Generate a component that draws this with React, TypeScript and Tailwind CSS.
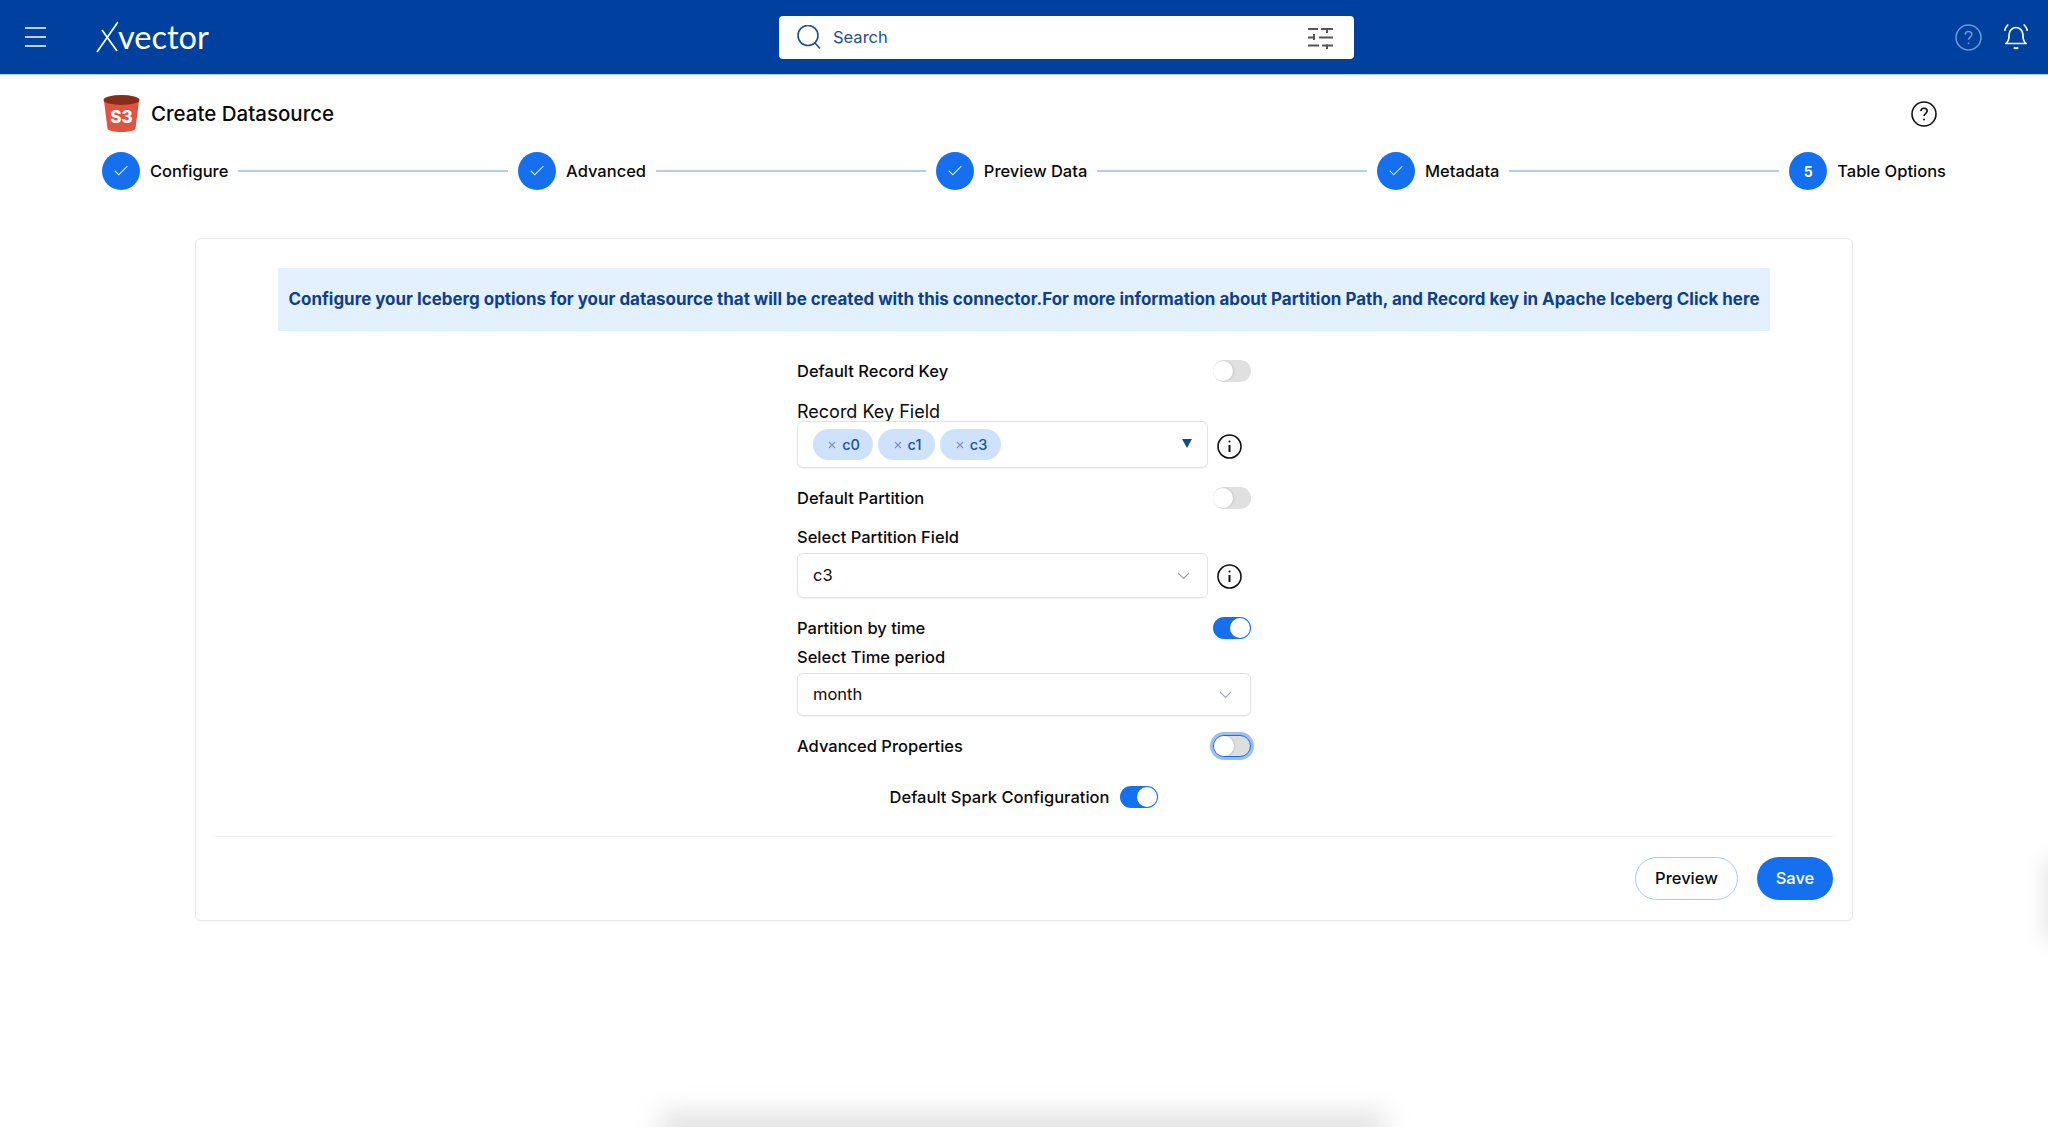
import { Fragment } from 'react';
import { Check } from 'lucide-react';

const steps = ['Configure', 'Advanced', 'Preview Data', 'Metadata', 'Table Options'];

function Toggle({ on = false, focused = false }: { on?: boolean; focused?: boolean }) {
  if (on) {
    return (
      <div className="flex h-[22px] w-[38px] shrink-0 items-center justify-end rounded-full bg-[#1570ef] p-px">
        <div className="h-5 w-5 rounded-full bg-white"></div>
      </div>
    );
  }
  return (
    <div
      className={
        focused
          ? 'flex h-[22px] w-[38px] shrink-0 items-center rounded-full border border-[#1570ef] bg-[#dedede] shadow-[0_0_0_3px_#9cc0f5]'
          : 'flex h-[22px] w-[38px] shrink-0 items-center rounded-full bg-[#e0e0e0]'
      }
    >
      <div className="h-5 w-5 rounded-full bg-white shadow-[1px_0_2px_rgba(0,0,0,0.12)]"></div>
    </div>
  );
}

function InfoIcon() {
  return (
    <svg width="25" height="25" viewBox="0 0 25 25" fill="none" stroke="#111" strokeWidth="1.6" className="shrink-0">
      <circle cx="12.5" cy="12.5" r="11.5" />
      <line x1="12.5" y1="11" x2="12.5" y2="18" strokeWidth="2" />
      <circle cx="12.5" cy="7.5" r="1.1" fill="#111" stroke="none" />
    </svg>
  );
}

function Chevron({ color = '#9aa3ad' }: { color?: string }) {
  return (
    <svg width="13" height="8" viewBox="0 0 13 8" fill="none" stroke={color} strokeWidth="1.1">
      <path d="M1 1l5.5 5.5L12 1" />
    </svg>
  );
}

function Chip({ label, width }: { label: string; width: string }) {
  return (
    <div className={`flex h-[31px] items-center justify-center gap-[6px] rounded-full bg-[#cfe2fb] pl-[2px] text-[14.5px] font-medium text-[#1d5296] ${width}`}>
      <svg width="8" height="8" viewBox="0 0 8 8" stroke="#7f93b8" strokeWidth="1.1">
        <path d="M1 1l6 6M7 1l-6 6" />
      </svg>
      <span>{label}</span>
    </div>
  );
}

function S3Icon() {
  return (
    <svg width="37" height="37" viewBox="0 0 37 37" className="shrink-0">
      <path d="M1 6h35l-3.5 27.5c-.3 2-6.5 3.5-14 3.5s-13.700-1.500-14-3.500z" fill="#e0533f" />
      <ellipse cx="18.500" cy="5" rx="18" ry="5" fill="#8a2c1c" />
      <text x="18.500" y="28" textAnchor="middle" fontSize="17" fontWeight="800" fill="#fff" fontFamily="Inter, sans-serif">S3</text>
    </svg>
  );
}

function SlidersIcon() {
  return (
    <svg width="25" height="23" viewBox="0 0 25 23" fill="#555">
      <rect x="0" y="2" width="10" height="2" />
      <rect x="13" y="2" width="12" height="2" />
      <rect x="18" y="2" width="2" height="5" />
      <rect x="0" y="10.500" width="7" height="2" />
      <rect x="5" y="8" width="2" height="6" />
      <rect x="11" y="10.500" width="14" height="2" />
      <rect x="0" y="18.500" width="11" height="2" />
      <rect x="14" y="18.500" width="11" height="2" />
      <rect x="18" y="18.500" width="2" height="4.500" />
    </svg>
  );
}

function BellIcon() {
  return (
    <svg width="26" height="26" viewBox="0 0 26 26" fill="none" stroke="#fff" strokeWidth="1.7">
      <path d="M3 19.500c1.900-1.500 2.700-3 2.900-5.500l.3-4c.3-3.700 3.200-6.500 6.800-6.500s6.500 2.800 6.800 6.500l.3 4c.2 2.500 1 4 2.900 5.500z" strokeLinejoin="round" />
      <path d="M10.800 23.500c1.300 1 3.100 1 4.400 0" strokeWidth="1.800" />
      <path d="M4.800 1c-1.500 1.400-2.500 3.100-3 5.200M21.200 1c1.500 1.400 2.500 3.100 3 5.200" strokeLinecap="round" />
    </svg>
  );
}

function StepDot({ index, done }: { index: number; done: boolean }) {
  return (
    <div className="flex h-[38px] w-[38px] shrink-0 items-center justify-center rounded-full bg-[#1570ef] text-[14px] font-bold text-white">
      {done ? <Check size={18} strokeWidth={1.4} /> : index + 1}
    </div>
  );
}

export default function App() {
  return (
    <div className="relative h-[1127px] w-full overflow-hidden bg-white font-['Inter',sans-serif] text-[16.5px] font-medium text-[#0a0a0a]">
      {/* Top bar */}
      <header className="flex h-[75px] items-center border-b border-[#b5cff2] bg-[#0041a0] pl-[25px] pr-[19px]">
        <svg width="21" height="20" viewBox="0 0 21 20" stroke="#fff" strokeWidth="1.6" className="shrink-0">
          <path d="M0 1h21M0 10h21M0 19h21" />
        </svg>
        <div className="ml-[50px] flex h-[32px] w-[113px] shrink-0 items-center text-white">
          <svg width="22" height="32" viewBox="0 0 22 32" fill="none" stroke="#fff" strokeWidth="1.7" className="shrink-0">
            <path d="M22 1L1 31M6 9l15 21" />
          </svg>
          <span className="font-['Lato',sans-serif] text-[32.500px] font-normal leading-[32px]">vector</span>
        </div>
        <div className="ml-[570px] flex h-[43px] w-[575px] shrink-0 items-center rounded-[4px] bg-white pl-[18px] pr-[21px]">
          <svg width="24" height="24" viewBox="0 0 24 24" fill="none" stroke="#1e4e96" strokeWidth="1.6" className="shrink-0">
            <circle cx="11" cy="10.500" r="10" />
            <path d="M18 18l5 5.500" />
          </svg>
          <span className="ml-3 text-[16.500px] font-normal text-[#1e4e96]">Search</span>
          <div className="ml-auto flex">
            <SlidersIcon />
          </div>
        </div>
        <div className="ml-auto flex items-center gap-[21px]">
          <svg width="27" height="27" viewBox="0 0 26 26" fill="none" stroke="#6f97d0" strokeWidth="1.5">
            <circle cx="13" cy="13" r="12" />
            <path d="M9.800 10.200c.2-1.800 1.500-2.900 3.200-2.900 1.800 0 3.200 1.200 3.200 2.800 0 2.400-3.200 2.500-3.200 5" />
            <circle cx="13" cy="18.600" r=".9" fill="#6f97d0" stroke="none" />
          </svg>
          <BellIcon />
        </div>
      </header>

      <main>
        {/* Title */}
        <div className="mt-5 flex h-[37px] items-center pl-[103px] pr-[111px]">
          <S3Icon />
          <h1 className="ml-[11px] mt-[1px] text-[20.500px] font-medium">Create Datasource</h1>
          <svg width="26" height="26" viewBox="0 0 26 26" fill="none" stroke="#111" strokeWidth="1.6" className="ml-auto">
            <circle cx="13" cy="13" r="12" />
            <path d="M9.800 10.200c.2-1.800 1.500-2.900 3.200-2.900 1.800 0 3.200 1.200 3.200 2.800 0 2.400-3.200 2.500-3.200 5" />
            <circle cx="13" cy="18.600" r="1" fill="#111" stroke="none" />
          </svg>
        </div>

        {/* Stepper */}
        <div className="mt-5 flex h-[38px] items-center pl-[102px] pr-[102px]">
          {steps.map((step, index) => (
            <Fragment key={step}>
              <StepDot index={index} done={index < 4} />
              <span className="ml-[10px] whitespace-nowrap">{step}</span>
              {index < 4 && <div className="mx-[10px] h-[2px] flex-1 bg-[#b0cdf0]"></div>}
            </Fragment>
          ))}
        </div>

        {/* Card */}
        <section className="ml-[195px] mt-12 w-[1658px] rounded-md border border-[#e8e8e8] px-[19px] pb-5 pt-[29px] shadow-[0_1px_2px_rgba(0,0,0,0.04)]">
          <div className="mx-auto flex h-[63px] w-[1492px] items-center justify-center bg-[#e3f0fd] text-[16.940px] font-bold text-[#0f3f8c]">
            Configure your Iceberg options for your datasource that will be created with this connector.For more information about Partition Path, and Record key in Apache Iceberg Click here
          </div>

          <div className="mx-auto w-[454px]">
            <div className="mt-[29px] flex h-[22px] items-center justify-between">
              <span>Default Record Key</span>
              <Toggle />
            </div>

            <div className="mt-5 h-[19px] text-[18px] font-normal leading-[19px]">Record Key Field</div>
            <div className="flex items-start">
              <div className="flex h-[47px] w-[411px] items-center gap-[5px] rounded-md border border-[#e2e2e2] pl-[15px] pr-[10px] shadow-[0_1px_1px_rgba(0,0,0,0.05)]">
                <Chip label="c0" width="w-[60px]" />
                <Chip label="c1" width="w-[57px]" />
                <Chip label="c3" width="w-[61px]" />
                <svg width="10" height="9" viewBox="0 0 10 9" fill="#0f4a99" className="mb-[2px] ml-auto mr-[5px]">
                  <path d="M0 0h10L5 9z" />
                </svg>
              </div>
              <div className="ml-[9px] mt-[13px]">
                <InfoIcon />
              </div>
            </div>

            <div className="mt-[19px] flex h-[22px] items-center justify-between">
              <span>Default Partition</span>
              <Toggle />
            </div>

            <div className="mb-[5px] mt-[17px] h-[22px] leading-[22px]">Select Partition Field</div>
            <div className="flex items-start">
              <div className="flex h-[45px] w-[411px] items-center justify-between rounded-md border border-[#e2e2e2] pl-[15px] pr-[17px] font-normal shadow-[0_1px_1px_rgba(0,0,0,0.05)]">
                <span>c3</span>
                <Chevron />
              </div>
              <div className="ml-[9px] mt-[11px]">
                <InfoIcon />
              </div>
            </div>

            <div className="mt-[19px] flex h-[22px] items-center justify-between">
              <span>Partition by time</span>
              <Toggle on />
            </div>

            <div className="mt-[8px] h-5 leading-5">Select Time period</div>
            <div className="mt-[6px] flex h-[43px] items-center justify-between rounded-md border border-[#e2e2e2] pl-[15px] pr-[18px] font-normal shadow-[0_1px_1px_rgba(0,0,0,0.05)]">
              <span>month</span>
              <Chevron color="#a0a4c0" />
            </div>

            <div className="mt-[19px] flex h-[22px] items-center justify-between">
              <span>Advanced Properties</span>
              <Toggle focused />
            </div>

            <div className="mt-[29px] flex h-[22px] items-center justify-center gap-[11px]">
              <span>Default Spark Configuration</span>
              <Toggle on />
            </div>
          </div>

          <div className="mt-[28px] border-t border-[#f0f0f0]"></div>

          <div className="mt-5 flex justify-end gap-[19px]">
            <button className="h-[43px] w-[103px] rounded-full border border-[#a9c6f0] bg-white font-medium text-[#0a0a0a]">Preview</button>
            <button className="h-[43px] w-[76px] rounded-full bg-[#1570ef] font-medium text-white">Save</button>
          </div>
        </section>
      </main>

      <div className="absolute bottom-[-20px] left-[660px] h-[36px] w-[725px] bg-[#e4e4e4] blur-[12px]"></div>
      <div className="absolute right-[-14px] top-[860px] h-[80px] w-[18px] bg-[#e4e4e4] blur-[10px]"></div>
    </div>
  );
}
